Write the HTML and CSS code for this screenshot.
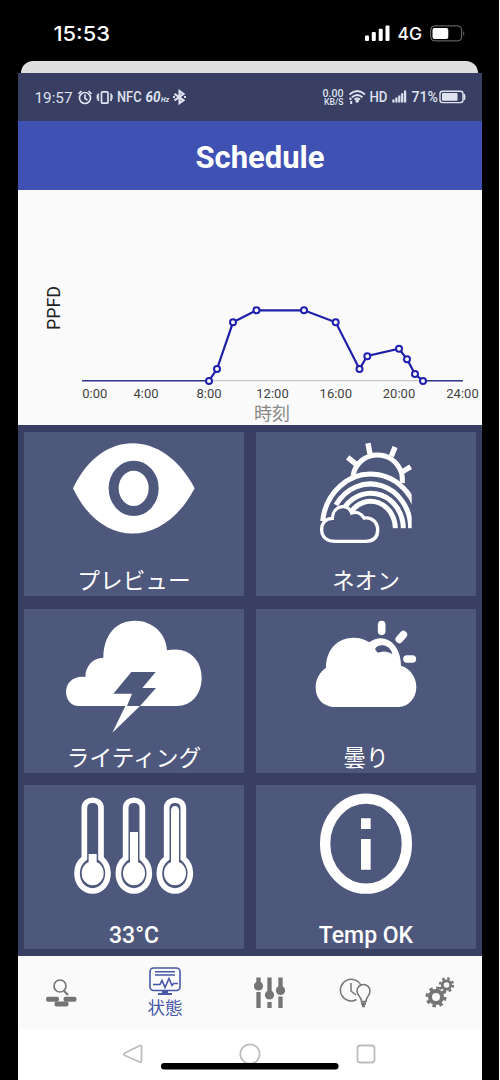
FILE: index.html
```html
<!DOCTYPE html>
<html lang="ja">
<head>
<meta charset="utf-8">
<title>Schedule</title>
<link rel="stylesheet" href="styles.css">
</head>
<body>
<div class="phone">
  <header class="outer-status">
    <svg class="outer-icons" viewBox="0 0 500 61">
      <text x="53.500" y="41" class="outer-time" textLength="56.500" lengthAdjust="spacingAndGlyphs">15:53</text>
      <g fill="#fff"><rect x="365" y="35.500" width="4" height="5.500" rx="1"/><rect x="371.800" y="32" width="4" height="9" rx="1"/><rect x="378.700" y="28.800" width="4" height="12.200" rx="1"/><rect x="385.500" y="25.500" width="4" height="15.500" rx="1"/>
      <rect x="432.500" y="28" width="15.800" height="11" rx="2"/></g>
      <text x="397.500" y="40.300" class="outer-net" textLength="24.500" lengthAdjust="spacingAndGlyphs">4G</text>
      <rect x="430.700" y="25.900" width="31" height="15" rx="4" fill="none" stroke="#777" stroke-width="1"/>
      <path d="M463.300 31v5q2-2.500 0-5z" fill="#777"/>
    </svg>
  </header>
  <div class="sheet-edge"></div>
  <main class="screen">
    <div class="inner-status">
      <svg viewBox="18 73 464 48" class="inner-icons">
        <g fill="#dfe2ef">
        <text x="34.500" y="103" font-size="15.500" textLength="38" lengthAdjust="spacingAndGlyphs">19:57</text>
        <text x="117" y="102.300" font-size="14" class="med" textLength="24.500" lengthAdjust="spacingAndGlyphs">NFC</text>
        <text x="145.500" y="102.300" font-size="14" class="ital" textLength="15" lengthAdjust="spacingAndGlyphs">60</text>
        <text x="161" y="102" font-size="7" class="ital" textLength="8" lengthAdjust="spacingAndGlyphs">Hz</text>
        <text x="322.500" y="96.500" font-size="10" class="med" textLength="21" lengthAdjust="spacingAndGlyphs">0.00</text>
        <text x="324" y="105" font-size="9" class="med" textLength="19.500" lengthAdjust="spacingAndGlyphs">KB/S</text>
        <text x="369.500" y="102.300" font-size="14.500" class="med" textLength="18" lengthAdjust="spacingAndGlyphs">HD</text>
        <text x="411.500" y="102.300" font-size="14" class="med" textLength="26.500" lengthAdjust="spacingAndGlyphs">71%</text>
        <rect x="392.300" y="99.500" width="2.200" height="3"/><rect x="395.300" y="97.500" width="2.200" height="5"/><rect x="398.200" y="95.500" width="2.200" height="7"/><rect x="401.100" y="93.200" width="2.200" height="9.300"/><rect x="404" y="90.500" width="2.200" height="12"/>
        <rect x="442" y="93" width="15.500" height="7.800" rx="1"/>
        <circle cx="357.200" cy="101" r="1.800"/><rect x="349.500" y="97.500" width="2" height="2.500"/><rect x="350.200" y="101" width="2" height="3"/>
        <path d="M463.500 94h1.500q1 3 0 6h-1.500z"/>
        </g>
        <g fill="none" stroke="#dfe2ef" stroke-width="1.700">
          <circle cx="85" cy="98" r="5.500"/><path d="M85 94.500v4l2.500 1.500M78.500 93.800l3-2.800M91.500 93.800l-3-2.800"/>
          <rect x="101.500" y="91.800" width="6.500" height="11.400" rx="1"/><path d="M98.300 93.500v1.500l-1 1 1 1-1 1 1 1v2M111 93.500v1.500l1 1-1 1 1 1-1 1v2"/>
          <path d="M174.500 93.800l9 6.400-4 3V91l4 3-9 6.400M173 97h2M184 97h2" stroke-width="2.100"/>
          <path d="M349.500 94.500q7.700-6.800 15.500 0M352 97.200q5.200-4.600 10.500 0M354.500 99.600q2.700-2.200 5.500 0" stroke-width="1.900"/>
          <rect x="440" y="91.200" width="23" height="11.400" rx="2.500" stroke-width="1.400"/>
        </g>
      </svg>
    </div>
    <div class="title">Schedule</div>
    <section class="chart">
      <svg viewBox="18 190 464 235" class="chart-svg">
        <text class="axis-name" transform="translate(60 330) rotate(-90)" textLength="44" lengthAdjust="spacingAndGlyphs">PPFD</text>
        <path d="M82 380.700H463" stroke="#bbb" stroke-width="1"/>
        <path d="M82 380.700H209M423 380.700H463" stroke="#35358c" stroke-width="1.500"/>
        <polyline points="209,380.700 217,369 233,322.300 256.500,310.300 304,310.300 335.700,322.300 359.500,369 367.300,356 399,348.800 407,359.300 415,374 423,381" fill="none" stroke="#1f1fa6" stroke-width="2.200"/>
        <g fill="#fafafa" stroke="#1f1fb0" stroke-width="2">
          <circle cx="209" cy="381" r="3"/><circle cx="217" cy="369" r="3"/><circle cx="233" cy="322.300" r="3"/><circle cx="256.500" cy="310.300" r="3"/><circle cx="304" cy="310.300" r="3"/><circle cx="335.700" cy="322.300" r="3"/><circle cx="359.500" cy="369" r="3"/><circle cx="367.300" cy="356.200" r="3"/><circle cx="399" cy="348.800" r="3"/><circle cx="407" cy="359.300" r="3"/><circle cx="415" cy="374" r="3"/><circle cx="423" cy="381" r="3"/>
        </g>
        <g class="ticks"><text x="94.800" y="398.300">0:00</text><text x="146" y="398.300">4:00</text><text x="209" y="398.300">8:00</text><text x="272.500" y="398.300">12:00</text><text x="335.800" y="398.300">16:00</text><text x="399" y="398.300">20:00</text><text x="462.500" y="398.300">24:00</text></g>
        <text class="axis-time" x="272" y="420">時刻</text>
      </svg>
    </section>
    <section class="grid">
      <div class="tile">
        <svg viewBox="18 21 660 396" class="tile-icon">
          <path d="M165 190C250 10 435 10 530 190C435 371 250 371 165 190Z" fill="#fff"/>
          <ellipse cx="347" cy="190" rx="60" ry="68" fill="#fff" stroke="#4e587c" stroke-width="30"/>
        </svg>
        <div class="label">プレビュー</div>
      </div>
      <div class="tile">
        <svg viewBox="18 21 660 396" class="tile-icon">
          <clipPath id="bow"><path d="M200 130H485V311H200Z"/></clipPath>
          <g fill="none" stroke="#fff">
            <path d="M309 152C323 75 430 66 455 145Q458 158 457 174" stroke-width="15"/>
            <path d="M354 55L360 87M435 66L424 94M293 97L319 118M482 125L457 140" stroke-width="16"/>
            <g stroke-width="15" clip-path="url(#bow)">
              <path d="M218 288A145 159 0 0 1 507 310"/>
              <path d="M258 240A121 133 0 0 1 482 310"/>
              <path d="M286 244A98 107 0 0 1 460 310"/>
              <path d="M304 260A74 82 0 0 1 436 310"/>
            </g>
            <path d="M258 349H346C373 349 383 335 383 315C383 291 365 276 342 279C333 264 318 259 305 264C293 234 249 240 247 280C227 281 215 294 215 314C215 337 232 349 258 349Z" stroke-width="10" fill="#4e587c"/>
          </g>
        </svg>
        <div class="label">ネオン</div>
      </div>
      <div class="tile">
        <svg viewBox="18 27 660 396" class="tile-icon">
          <path d="M184 318C157 318 144 297 144 275C144 248 168 226 202 231C202 198 225 173 256 173C257 104 294 62 350 62C407 62 445 103 447 151C507 137 551 176 551 232C551 285 519 318 477 318Z" fill="#fff"/>
          <path d="M340 216H413L373 264H414L366 318H327L342 281H286Z" fill="#4e587c"/>
          <path d="M322 318H366L283 398Z" fill="#fff"/>
        </svg>
        <div class="label">ライティング</div>
      </div>
      <div class="tile">
        <svg viewBox="18 27 660 396" class="tile-icon">
          <path d="M247 321C214 316 197 293 197 262C197 237 209 217 228 203C228 147 264 113 311 113Q339 113 358 127C402 94 453 131 453 197C482 205 499 233 499 261C499 293 478 318 449 321Z" fill="#fff"/>
          <path d="M375 148C381 130 420 130 427 162Q411 152 396 155L383 158Z" fill="#4e587c"/>
          <path d="M395 74V94M460 104L448 118M471 177H487" stroke="#fff" stroke-width="23" stroke-linecap="round"/>
        </svg>
        <div class="label">曇り</div>
      </div>
      <div class="tile">
        <svg viewBox="18 15 660 396" class="tile-icon">
          <g id="thermo">
            <path d="M199 235V84C199 53 249 53 249 84V235Q270 252 270 280C270 310 250 333 224 333C197 333 177 310 177 280Q177 252 199 235Z" fill="none" stroke="#fff" stroke-width="17"/>
            <ellipse cx="224" cy="280" rx="33" ry="36" fill="#fff"/>
          </g>
          <use href="#thermo" x="124"/><use href="#thermo" x="247"/>
          <path d="M212 222H236V260H212ZM336 156H360V260H336Z" fill="#fff"/>
          <path d="M459 260V90Q461 78 471 78Q481 78 483 90V260Z" fill="#fff"/>
        </svg>
        <div class="label latin">33°C</div>
      </div>
      <div class="tile">
        <svg viewBox="18 15 660 396" class="tile-icon">
          <ellipse cx="348" cy="191" rx="122.500" ry="135" fill="none" stroke="#fff" stroke-width="31"/>
          <path d="M333 115H362V147H333ZM333 177H362V269H333Z" fill="#fff"/>
        </svg>
        <div class="label latin">Temp OK</div>
      </div>
    </section>
    <nav class="tabs">
      <div class="tab"><svg class="tab-icon" viewBox="0 0 32 34"><circle cx="15" cy="10" r="6" fill="none" stroke="#777" stroke-width="1.700"/><path d="M19 15l4 4" stroke="#777" stroke-width="2.200"/><rect x="1" y="20.700" width="13" height="5" rx="2" fill="#757575"/><rect x="18.500" y="20.700" width="13" height="5" rx="2" fill="#757575"/><rect x="9.500" y="25.500" width="14" height="5" rx="2" fill="#757575"/></svg></div>
      <div class="tab active">
        <svg class="monitor" viewBox="0 0 34 30"><g fill="none" stroke="#4858a8" stroke-width="1.600"><rect x="2" y="2" width="30" height="22.500" rx="3.500"/><path d="M7 5.800h20M7 9h20M5 18.500h7l2-4 3 7 4-9 3 7 1.500-2H30"/><path d="M10 28h14" stroke-width="2"/><path d="M14 26h6" stroke-width="3"/></g></svg>
        <span class="tab-name">状態</span>
      </div>
      <div class="tab"><svg class="tab-icon" viewBox="0 0 32 34"><g stroke="#757575" stroke-width="4.300"><path d="M4.500 1.500V13M4.500 16V32M15.500 1.500V17M15.500 26V32M26.500 1.500V17M26.500 20.500V32"/></g><g fill="#757575"><circle cx="4.500" cy="10" r="4.600"/><circle cx="15.500" cy="19" r="4.600"/><circle cx="26.500" cy="14.500" r="4.600"/></g></svg></div>
      <div class="tab"><svg class="tab-icon" viewBox="0 0 32 34"><g fill="none" stroke="#777" stroke-width="1.500"><path d="M17.500 23.500A10.800 10.800 0 1 1 22 9.500M12 7v8l5 4"/><path d="M22.500 25.500c0-5-4.500-5.500-4.500-10.500a6.500 6.500 0 0 1 13 0c0 5-4 5.500-4 10.500z"/><path d="M22 27.500h5M23 30h3" stroke-width="2.500"/></g></svg></div>
      <div class="tab"><svg class="tab-icon" viewBox="0 0 32 34"><g fill="none" stroke="#757575"><circle cx="12" cy="21" r="6" stroke-width="4"/><circle cx="12" cy="21" r="9" stroke-width="3" stroke-dasharray="3.530 3.530"/><circle cx="22.500" cy="9" r="4.200" stroke-width="2.800"/><circle cx="22.500" cy="9" r="6.500" stroke-width="2.400" stroke-dasharray="2.550 2.550"/></g></svg></div>
    </nav>
    <div class="system-nav">
      <svg viewBox="18 1029 464 51" class="system-icons">
        <g fill="none" stroke="#bdbdbd" stroke-width="1.800" stroke-linejoin="round"><path d="M140 1045.500Q141.500 1045 141.500 1047V1060.500Q141.500 1063 139.500 1062L125 1055.500Q122.500 1054.300 125 1053Z"/><circle cx="250" cy="1054" r="9.700"/><rect x="357.500" y="1045.500" width="17" height="17" rx="2.500"/></g>
        <rect x="161" y="1063" width="177.500" height="6.500" rx="3.200" fill="#000"/>
      </svg>
    </div>
  </main>
</div>
</body>
</html>
```

FILE: styles.css
```css
* { box-sizing: border-box; }
body { margin: 0; background: #fff; font-family: Roboto, "Noto Sans CJK JP", sans-serif; }
svg { display: block; }
.phone { width: 499px; height: 1080px; background: #000; overflow: hidden; }
.outer-status { height: 61px; }
.outer-icons { width: 500px; height: 61px; }
.outer-time { font: 500 20.500px Inter, sans-serif; fill: #fff; }
.outer-net { font: 500 17.500px Inter, sans-serif; fill: #fff; }
.sheet-edge { height: 12px; margin: 0 21px; background: #dfdfdf; border-radius: 12px 12px 0 0; }
.screen { width: 464px; margin-left: 18px; background: #fff; }
.inner-status { height: 48px; background: #383f62; }
.inner-icons { width: 464px; height: 48px; }
.med { font-weight: 500; }
.ital { font-weight: 700; font-style: italic; }
.title { height: 69px; padding: 3px 0 0 20px; background: #4051b4; color: #fff; font-size: 31px; font-weight: 700; line-height: 68px; text-align: center; }
.chart { height: 235px; background: #fafafa; }
.chart-svg { width: 464px; height: 235px; }
.axis-name { font-size: 18px; fill: #222; }
.ticks { font-size: 13px; fill: #444; text-anchor: middle; }
.axis-time { font-size: 18px; fill: #888; text-anchor: middle; }
.grid { height: 531px; padding: 7px 6px; display: grid; grid-template-columns: 220px 220px; grid-template-rows: 164px 164px 164px; column-gap: 12px; row-gap: 12.500px; background: #383f62; }
.tile { background: #4e587c; }
.tile-icon { width: 220px; height: 132px; }
.label { height: 32px; color: #fff; font-size: 22.700px; line-height: 35px; text-align: center; }
.latin { font-size: 23px; font-weight: 500; line-height: 37px; }
.tabs { height: 73px; display: flex; background: #fafafa; }
.tab { width: 85px; display: flex; flex-direction: column; justify-content: center; align-items: center; }
.active { width: 124px; }
.tab-icon { width: 32px; height: 34px; }
.monitor { width: 34px; height: 30px; }
.tab-name { color: #4858a8; font-size: 17.500px; line-height: 24px; white-space: nowrap; }
.system-nav { height: 51px; background: #fff; }
.system-icons { width: 464px; height: 51px; }
```
